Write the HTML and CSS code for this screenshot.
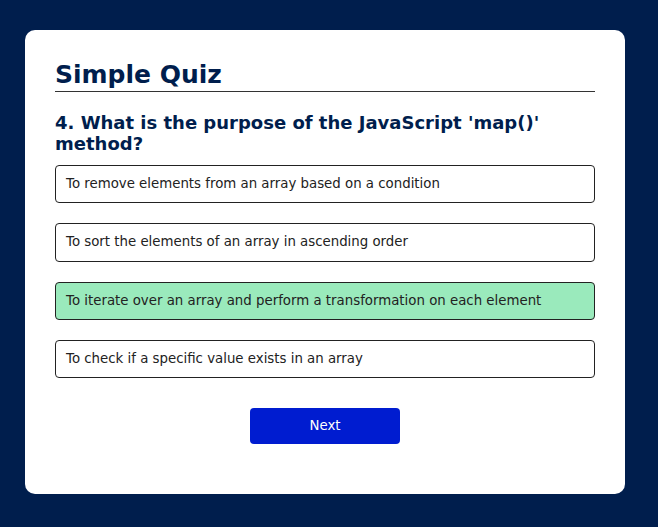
FILE: index.html
```html
<!DOCTYPE html>
<html lang="en">
<head>
<meta charset="utf-8">
<title>Simple Quiz</title>
<link rel="stylesheet" href="styles.css">
</head>
<body>
<div class="app">
  <h1 class="title">Simple Quiz</h1>
  <div class="quiz">
    <h2 class="question">4. What is the purpose of the JavaScript 'map()' method?</h2>
    <div class="answers">
      <button class="btn">To remove elements from an array based on a condition</button>
      <button class="btn">To sort the elements of an array in ascending order</button>
      <button class="btn correct">To iterate over an array and perform a transformation on each element</button>
      <button class="btn">To check if a specific value exists in an array</button>
    </div>
    <button class="next-btn">Next</button>
  </div>
</div>
</body>
</html>
```

FILE: styles.css
```css
* {
  margin: 0;
  padding: 0;
  box-sizing: border-box;
  font-family: "DejaVu Sans", Verdana, sans-serif;
  line-height: 1.215;
}

body {
  background: #001e4d;
  height: 527px;
  overflow: hidden;
}

.app {
  background: #fff;
  width: 600px;
  margin: 30px 0 0 25px;
  border-radius: 10px;
  padding: 30px;
}

.title {
  font-size: 25px;
  line-height: 30.5px;
  color: #001e4d;
  font-weight: bold;
  border-bottom: 1px solid #333;
}

.quiz {
  padding: 20px 0;
}

.question {
  font-size: 18px;
  color: #001e4d;
  font-weight: bold;
}

.answers {
  display: flex;
  flex-direction: column;
  gap: 20px;
  margin: 10px 0 30px;
}

.btn {
  background: #fff;
  color: #222;
  width: 100%;
  border: 1px solid #222;
  padding: 10px;
  text-align: left;
  border-radius: 4px;
  font-size: 13.333px;
}

.btn.correct {
  background: #9aeabc;
}

.next-btn {
  display: block;
  background: #001cd0;
  color: #fff;
  width: 150px;
  border: 0;
  padding: 10px;
  margin: 0 auto;
  border-radius: 4px;
  font-size: 13.333px;
}
```
